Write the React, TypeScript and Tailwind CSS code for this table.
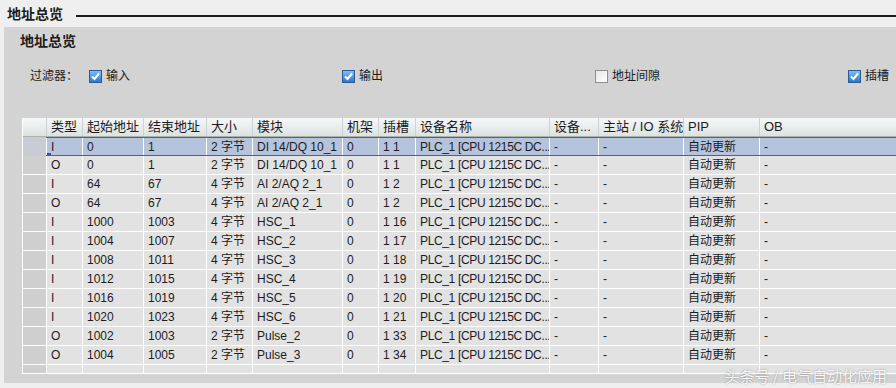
import React from "react";

const cols = [
  { label: "类型", w: "w-[36px]" },
  { label: "起始地址", w: "w-[61px]" },
  { label: "结束地址", w: "w-[63px]" },
  { label: "大小", w: "w-[46px]" },
  { label: "模块", w: "w-[90px]" },
  { label: "机架", w: "w-[36px]" },
  { label: "插槽", w: "w-[37px]" },
  { label: "设备名称", w: "w-[134px]" },
  { label: "设备...", w: "w-[49px]" },
  { label: "主站 / IO 系统", w: "w-[85px]" },
  { label: "PIP", w: "w-[76px]" },
  { label: "OB", w: "flex-1" },
];

const base = [
  ["I", "0", "1", "2 字节", "DI 14/DQ 10_1", "0", "1 1"],
  ["O", "0", "1", "2 字节", "DI 14/DQ 10_1", "0", "1 1"],
  ["I", "64", "67", "4 字节", "AI 2/AQ 2_1", "0", "1 2"],
  ["O", "64", "67", "4 字节", "AI 2/AQ 2_1", "0", "1 2"],
  ["I", "1000", "1003", "4 字节", "HSC_1", "0", "1 16"],
  ["I", "1004", "1007", "4 字节", "HSC_2", "0", "1 17"],
  ["I", "1008", "1011", "4 字节", "HSC_3", "0", "1 18"],
  ["I", "1012", "1015", "4 字节", "HSC_4", "0", "1 19"],
  ["I", "1016", "1019", "4 字节", "HSC_5", "0", "1 20"],
  ["I", "1020", "1023", "4 字节", "HSC_6", "0", "1 21"],
  ["O", "1002", "1003", "2 字节", "Pulse_2", "0", "1 33"],
  ["O", "1004", "1005", "2 字节", "Pulse_3", "0", "1 34"],
];

const rows = base.map((r) => [...r, "PLC_1 [CPU 1215C DC...", "-", "-", "自动更新", "-"]);

function CheckBox({ checked }: { checked: boolean }) {
  if (!checked) {
    return (
      <span className="block shrink-0 w-[13px] h-[13px] border border-[#8e8f8f] bg-gradient-to-br from-[#e6e6e6] to-[#ffffff]" />
    );
  }
  return (
    <span className="flex shrink-0 items-center justify-center w-[13px] h-[13px] border border-[#2c5b92] bg-gradient-to-b from-[#7fbff0] to-[#2a78cc]">
      <svg width="9" height="9" viewBox="0 0 9 9">
        <path d="M1 4.5 L3.5 7 L8 1.5" fill="none" stroke="#ffffff" strokeWidth="2" />
      </svg>
    </span>
  );
}

function Filter({ checked, label }: { checked: boolean; label: string }) {
  return (
    <div className="w-[253px] shrink-0 flex items-center gap-[4px] whitespace-nowrap">
      <CheckBox checked={checked} />
      <span>{label}</span>
    </div>
  );
}

export default function App() {
  return (
    <div className="relative w-[896px] h-[388px] overflow-hidden bg-[#efefef] text-[12px] text-[#1c1c1c] font-['Liberation_Sans','Noto_Sans_CJK_SC',sans-serif]">
      <div className="h-[27px] flex items-center pl-[7px]">
        <span className="text-[14px] font-bold leading-none">地址总览</span>
        <div className="flex-1 h-[2px] bg-[#1a1a1a] ml-[13px] mt-[5px]" />
      </div>

      <div className="ml-[4px] h-[356px] bg-[#d3d3d3] flex flex-col overflow-hidden">
        <div className="h-[28px] flex items-center pl-[16px] text-[14px] font-bold">地址总览</div>

        <div className="h-[42px] flex items-center pl-[26px] overflow-hidden">
          <span className="w-[59px] shrink-0 whitespace-nowrap">过滤器：</span>
          <Filter checked label="输入" />
          <Filter checked label="输出" />
          <Filter checked={false} label="地址间隙" />
          <Filter checked label="插槽" />
        </div>

        <div className="mt-[21px] ml-[18px] flex flex-col border-l border-white">
          {/* header */}
          <div className="h-[19px] flex border-b border-[#a9b4a8] bg-gradient-to-b from-[#f6f8f8] to-[#dde2e3] text-[13px]">
            <div className="w-[23px]" />
            {cols.map((c) => (
              <div
                key={c.label}
                className={`${c.w} shrink-0 border-l border-[#cdd2d2] pl-[4px] flex items-center whitespace-nowrap overflow-hidden`}
              >
                {c.label}
              </div>
            ))}
          </div>

          {/* rows */}
          {rows.map((r, i) => {
            const sel = i === 0;
            return (
              <div
                key={i}
                className={
                  sel
                    ? "h-[19px] flex bg-[#b5c3dd]"
                    : "h-[19px] flex bg-[#e2e2e2] border-b border-white"
                }
              >
                <div className={sel ? "w-[23px] bg-[#c9ccd5]" : "w-[23px] bg-[#cfcfcf]"} />
                <div className={sel ? "flex flex-1 border-y border-[#4a5da6]" : "flex flex-1"}>
                  {cols.map((c, j) => (
                    <div
                      key={j}
                      className={`${c.w} relative shrink-0 border-l border-white pl-[4px] flex items-center whitespace-nowrap overflow-hidden ${
                        j === 7 ? "tracking-[-0.35px]" : ""
                      }`}
                    >
                      {r[j]}
                      {sel && j === 0 && (
                        <span className="absolute left-0 bottom-[-2px] w-[4px] h-[4px] bg-[#3a4fa6]" />
                      )}
                    </div>
                  ))}
                </div>
              </div>
            );
          })}

          {/* empty remainder */}
          <div className="h-[9px] flex bg-[#e2e2e2] border-b border-white">
            <div className="w-[23px] bg-[#cfcfcf]" />
            {cols.map((c, j) => (
              <div key={j} className={`${c.w} shrink-0 border-l border-white`} />
            ))}
          </div>
        </div>
      </div>

      <div className="absolute right-[9px] bottom-[1px] text-[15px] text-white/90 [text-shadow:0_0_2px_rgba(0,0,0,0.4)] font-['Noto_Sans_CJK_SC',sans-serif]">
        头条号 / 电气自动化应用
      </div>
    </div>
  );
}
